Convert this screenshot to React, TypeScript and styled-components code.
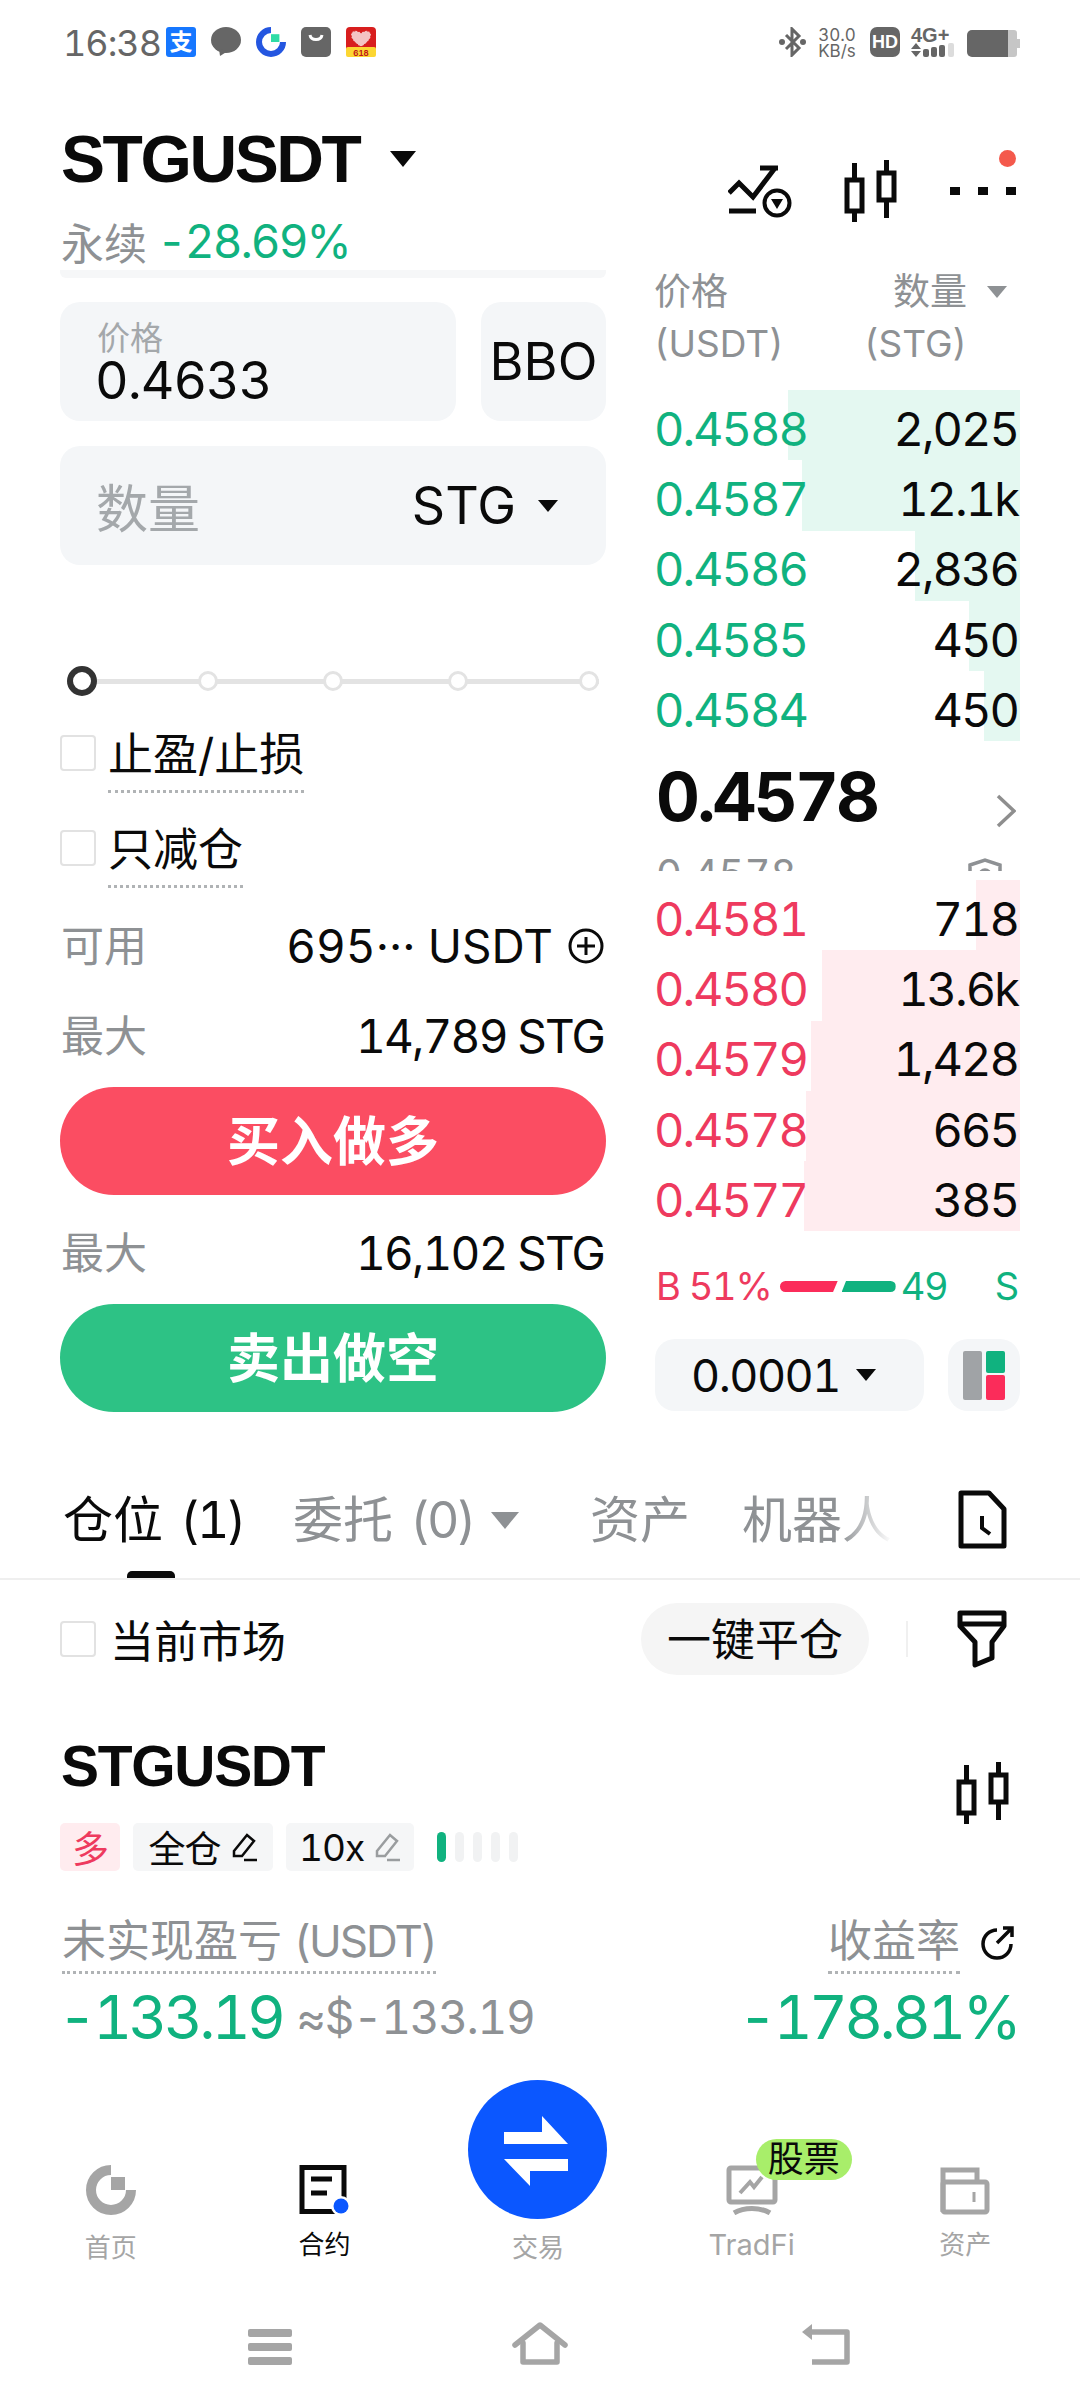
import React from "react";
import styled, { createGlobalStyle } from "styled-components";

const GlobalStyle = createGlobalStyle`
  html, body {
    margin: 0;
    padding: 0;
    background: #ffffff;
  }
  * {
    box-sizing: border-box;
  }
`;

const SANS = `Inter, "Noto Sans CJK SC", sans-serif`;
const GREEN = "#10b27f";
const RED = "#ee3a5e";
const GRAY = "#8e9194";
const LIGHT = "#f4f6f8";

const Page = styled.div`
  width: 1080px;
  height: 2408px;
  overflow: hidden;
  background: #ffffff;
  font-family: ${SANS};
  font-variant-numeric: tabular-nums;
  color: #0a0a0a;
  display: flex;
  flex-direction: column;
`;

/* status bar */
const StatusBar = styled.div`
  height: 84px;
  padding: 27px 60px 0 63px;
  display: flex;
  justify-content: space-between;
  align-items: flex-start;
`;

const StatusGroup = styled.div`
  display: flex;
  align-items: flex-start;
  gap: 15px;
`;

const Clock = styled.span`
  font-size: 36px;
  line-height: 32px;
  letter-spacing: -1px;
  color: #666666;
  width: 88px;
  white-space: nowrap;
`;

const AlipayTile = styled.span`
  width: 30px;
  height: 30px;
  border-radius: 3px;
  background: #1677ff;
  color: #ffffff;
  font-size: 23px;
  line-height: 30px;
  text-align: center;
  font-weight: 700;
`;

const Speed = styled.span`
  width: 40px;
  font-size: 17px;
  line-height: 16px;
  color: #666666;
  text-align: center;
  margin: 0 -2px 0 -4px;
`;

const HdBadge = styled.span`
  width: 30px;
  height: 30px;
  border-radius: 7px;
  background: #666666;
  color: #ffffff;
  font-family: "Liberation Sans", sans-serif;
  font-size: 18px;
  font-weight: 700;
  line-height: 30px;
  text-align: center;
`;

const NetworkBox = styled.div`
  width: 45px;
  margin: 0 -4px;
  display: flex;
  flex-direction: column;
  color: #666666;
`;

const NetworkLabel = styled.span`
  font-family: "Liberation Sans", sans-serif;
  font-size: 20px;
  font-weight: 700;
  line-height: 16px;
`;

/* market header */
const MarketHeader = styled.div`
  height: 180px;
  padding: 43px 64px 0 61px;
  display: flex;
  justify-content: space-between;
`;

const TitleRow = styled.div`
  display: flex;
  align-items: center;
  gap: 30px;
  height: 64px;
`;

const MarketTitle = styled.span`
  font-family: "Liberation Sans", sans-serif;
  font-weight: 700;
  font-size: 66px;
  line-height: 66px;
  letter-spacing: -2.4px;
`;

const SubRow = styled.div`
  margin-top: 26px;
  display: flex;
  gap: 10px;
  align-items: center;
  height: 47px;
  font-size: 43px;
  color: ${GRAY};
`;

const Change = styled.span`
  color: ${GREEN};
  font-size: 46px;
  letter-spacing: -2px;
`;

const Caret = styled.span<{ $size: number; $color?: string }>`
  display: inline-block;
  width: 0;
  height: 0;
  border-left: ${(p) => p.$size}px solid transparent;
  border-right: ${(p) => p.$size}px solid transparent;
  border-top: ${(p) => Math.round(p.$size * 1.2)}px solid ${(p) => p.$color ?? "#0a0a0a"};
`;

const ActionIcons = styled.div`
  margin-top: 23px;
  display: flex;
  align-items: flex-start;
  position: relative;
`;

const TrendSlot = styled.div`
  margin: 15px 52px 0 0;
`;

const CandleSlot = styled.div`
  margin-top: 10px;
`;

const MoreDots = styled.div`
  margin: 37px 0 0 50px;
  width: 66px;
  display: flex;
  justify-content: space-between;
`;

const MoreDot = styled.span`
  width: 10px;
  height: 8px;
  background: #0a0a0a;
`;

const RedDot = styled.span`
  position: absolute;
  right: 0;
  top: 0;
  width: 17px;
  height: 17px;
  border-radius: 50%;
  background: #f4594c;
`;

/* trade panel */
const TradePanel = styled.div`
  height: 1148px;
  padding: 0 60px;
  display: grid;
  grid-template-columns: 546px 364px;
  column-gap: 50px;
`;

const FormColumn = styled.div`
  display: flex;
  flex-direction: column;
`;

const ScrollEdge = styled.div`
  height: 8px;
  margin-top: 6px;
  border-radius: 0 0 6px 6px;
  background: #f6f7f8;
`;

const FieldRow = styled.div`
  margin-top: 24px;
  display: flex;
  gap: 25px;
`;

const Field = styled.div`
  height: 119px;
  flex: 1;
  background: ${LIGHT};
  border-radius: 20px;
`;

const PriceField = styled(Field)`
  padding: 16px 35px;
  display: flex;
  flex-direction: column;
`;

const FieldHint = styled.span`
  font-size: 33px;
  line-height: 40px;
  color: #a4a8ab;
  margin-left: 2px;
`;

const FieldValue = styled.span`
  font-size: 52px;
  line-height: 46px;
  letter-spacing: -1px;
`;

const BboButton = styled(Field)`
  flex: 0 0 125px;
  font-size: 52px;
  line-height: 119px;
  text-align: center;
`;

const QuantityField = styled(Field)`
  flex: none;
  margin-top: 25px;
  padding: 0 48px 0 36px;
  display: flex;
  align-items: center;
  gap: 22px;
`;

const QuantityHint = styled.span`
  font-size: 52px;
  color: #a4a8ab;
  flex: 1;
`;

const QuantityUnit = styled.span`
  font-size: 52px;
`;

const Slider = styled.div`
  margin: 101px 7px 0 7px;
  height: 30px;
  display: flex;
  align-items: center;
  background: linear-gradient(#e3e3e3, #e3e3e3) center / 100% 5px no-repeat;
`;

const SliderThumb = styled.span`
  width: 30px;
  height: 30px;
  border-radius: 50%;
  border: 6px solid #333333;
  background: #ffffff;
`;

const SliderStop = styled.span<{ $gap: number }>`
  width: 20px;
  height: 20px;
  margin-left: ${(p) => p.$gap}px;
  border-radius: 50%;
  border: 3px solid #e3e3e3;
  background: #ffffff;
`;

const CheckRow = styled.div<{ $top: number }>`
  margin-top: ${(p) => p.$top}px;
  display: flex;
  align-items: flex-start;
  gap: 12px;
`;

const CheckBox = styled.span`
  flex: none;
  width: 36px;
  height: 36px;
  margin-top: 10px;
  border: 2px solid #e2e2e2;
  border-radius: 4px;
`;

const FilterBox = styled(CheckBox)`
  margin-top: 0;
`;

const DottedLabel = styled.span<{ $size?: number; $line?: number; $color?: string }>`
  font-size: ${(p) => p.$size ?? 45}px;
  line-height: ${(p) => p.$line ?? 60}px;
  color: ${(p) => p.$color ?? "#0a0a0a"};
  padding-bottom: 5px;
  border-bottom: 3px dotted #b0b3b5;
  white-space: nowrap;
`;

const UnitText = styled.span`
  letter-spacing: -2px;
`;

const InfoRow = styled.div<{ $top: number }>`
  margin-top: ${(p) => p.$top}px;
  height: 60px;
  display: flex;
  justify-content: space-between;
  align-items: center;
`;

const InfoLabel = styled.span`
  font-size: 43px;
  color: ${GRAY};
  margin: 0 0 6px 1px;
`;

const InfoValue = styled.span`
  font-size: 46px;
  letter-spacing: -1.8px;
  margin-right: 2px;
  display: flex;
  align-items: center;
  gap: 15px;
`;

const AvailableValue = styled(InfoValue)`
  letter-spacing: 0;
`;

const TradeButton = styled.div<{ $bg: string }>`
  margin-top: 21px;
  height: 108px;
  border-radius: 54px;
  background: ${(p) => p.$bg};
  color: #ffffff;
  font-size: 53px;
  font-weight: 700;
  line-height: 111px;
  text-align: center;
`;

/* order book */
const BookColumn = styled.div`
  display: flex;
  flex-direction: column;
`;

const BookHeader = styled.div`
  margin-top: 2px;
  height: 124px;
  display: flex;
  justify-content: space-between;
  color: ${GRAY};
  font-size: 37px;
  line-height: 52px;
`;

const HeadCol = styled.div`
  display: flex;
  flex-direction: column;
  margin-left: -2px;
`;

const AmountHead = styled(HeadCol)`
  width: 156px;
  padding-right: 13px;
`;

const AmountTitle = styled.span`
  display: flex;
  align-items: center;
  justify-content: flex-end;
  gap: 20px;
`;

const BookRow = styled.div<{ $depth: number; $tint: string }>`
  height: 70.3px;
  padding: 6px 2px 0 0;
  display: flex;
  justify-content: space-between;
  align-items: center;
  font-size: 47px;
  letter-spacing: -2px;
  background: linear-gradient(
    to left,
    ${(p) => p.$tint} ${(p) => p.$depth}px,
    transparent ${(p) => p.$depth}px
  );
`;

const BookPrice = styled.span<{ $color: string }>`
  color: ${(p) => p.$color};
  margin-left: -2px;
`;

const MidSection = styled.div`
  height: 138.5px;
  overflow: hidden;
  display: flex;
  flex-direction: column;
`;

const MidTop = styled.div`
  height: 109px;
  padding: 0 4px 0 0;
  display: flex;
  justify-content: space-between;
  align-items: center;
`;

const MidPrice = styled.span`
  font-size: 68px;
  font-weight: 700;
  letter-spacing: -2.8px;
`;

const ChevronSlot = styled.span`
  margin-top: 30px;
  display: flex;
`;

const MarkRow = styled.div`
  height: 21px;
  overflow: hidden;
  display: flex;
  justify-content: space-between;
  padding-right: 18px;
  font-size: 40px;
  line-height: 48px;
  color: ${GRAY};
`;

const ShieldSlot = styled.span`
  margin-top: 4px;
`;

const RatioRow = styled.div`
  margin-top: 32px;
  height: 46px;
  display: flex;
  align-items: center;
  padding-right: 2px;
  font-size: 38px;
  letter-spacing: -1.2px;
`;

const RatioText = styled.span<{ $color: string }>`
  color: ${(p) => p.$color};
`;

const RatioBuy = styled.span`
  width: 58px;
  height: 11px;
  margin-left: 8px;
  background: #fb2c5a;
  border-radius: 6px 0 0 6px;
  clip-path: polygon(0 0, 100% 0, 92% 100%, 0 100%);
`;

const RatioSell = styled.span`
  width: 54px;
  height: 11px;
  margin: 0 5px 0 4px;
  background: ${GREEN};
  border-radius: 0 6px 6px 0;
  clip-path: polygon(8% 0, 100% 0, 100% 100%, 0 100%);
`;

const RatioEnd = styled.span`
  margin-left: auto;
  color: ${GREEN};
`;

const BookTools = styled.div`
  margin-top: 30px;
  display: flex;
  justify-content: space-between;
  margin-left: -1px;
`;

const StepPicker = styled.div`
  width: 269px;
  height: 72px;
  border-radius: 20px;
  background: ${LIGHT};
  padding-left: 36px;
  display: flex;
  align-items: center;
  gap: 16px;
  font-size: 45px;
  letter-spacing: -1.5px;
`;

const LayoutButton = styled.div`
  width: 72px;
  height: 72px;
  border-radius: 20px;
  background: ${LIGHT};
  display: flex;
  align-items: center;
  justify-content: center;
`;

/* positions tabs */
const TabBar = styled.div`
  height: 168px;
  padding: 73px 0 0 63px;
  border-bottom: 2px solid #efefef;
  display: flex;
  align-items: flex-start;
`;

const Tab = styled.div<{ $active?: boolean; $width: number }>`
  position: relative;
  width: ${(p) => p.$width}px;
  height: 93px;
  display: flex;
  align-items: flex-start;
  gap: 17px;
  font-size: 50px;
  line-height: 70px;
  white-space: nowrap;
  color: ${(p) => (p.$active ? "#0a0a0a" : GRAY)};
`;

const TabCount = styled.span`
  letter-spacing: -2.5px;
`;

const TabIndicator = styled.span`
  position: absolute;
  left: 64px;
  bottom: 0;
  width: 48px;
  height: 7px;
  border-radius: 5px 5px 0 0;
  background: #0a0a0a;
`;

const TabCaretWrap = styled.span`
  display: flex;
  margin-top: 27px;
`;

const FadedTab = styled.span`
  -webkit-mask-image: linear-gradient(to right, #000 65%, transparent 100%);
  mask-image: linear-gradient(to right, #000 65%, transparent 100%);
`;

const TabEndIcon = styled.div`
  margin: 5px 0 0 63px;
`;

const FilterRow = styled.div`
  margin-top: 23px;
  height: 72px;
  padding: 0 73px 0 60px;
  display: flex;
  align-items: center;
`;

const FilterLabel = styled.span`
  font-size: 44px;
  margin-left: 14px;
  flex: 1;
`;

const ClosePill = styled.span`
  width: 228px;
  height: 72px;
  border-radius: 36px;
  background: #f5f5f5;
  font-size: 44px;
  line-height: 74px;
  text-align: center;
`;

const FilterDivider = styled.span`
  width: 2px;
  height: 36px;
  margin: 0 49px 0 37px;
  background: #f0f0f0;
`;

/* open position */
const PositionCard = styled.div`
  margin-top: 61px;
  padding: 0 62px 0 60px;
`;

const PositionHead = styled.div`
  height: 60px;
  display: flex;
  justify-content: space-between;
  align-items: flex-start;
`;

const PositionTitle = styled.span`
  margin-left: 1px;
  font-family: "Liberation Sans", sans-serif;
  font-weight: 700;
  font-size: 57px;
  line-height: 60px;
  letter-spacing: -1.3px;
`;

const PositionChart = styled.div`
  margin: 26px 6px 0 0;
  height: 0;
`;

const TagRow = styled.div`
  margin-top: 27px;
  display: flex;
  align-items: center;
  gap: 13px;
`;

const Tag = styled.span<{ $long?: boolean; $width: number }>`
  width: ${(p) => p.$width}px;
  height: 48px;
  border-radius: 5px;
  background: ${(p) => (p.$long ? "#ffecef" : "#f5f6f7")};
  color: ${(p) => (p.$long ? RED : "#0a0a0a")};
  font-size: 37px;
  letter-spacing: -1px;
  display: flex;
  align-items: center;
  justify-content: center;
  gap: 9px;
`;

const LeverageTicks = styled.div`
  margin-left: 10px;
  display: flex;
  gap: 9px;
`;

const Tick = styled.span<{ $on?: boolean }>`
  width: 9px;
  height: 30px;
  border-radius: 5px;
  background: ${(p) => (p.$on ? GREEN : "#f1f2f3")};
`;

const LabelRow = styled.div`
  margin: 45px 0 0 2px;
  display: flex;
  justify-content: space-between;
  align-items: flex-start;
`;

const YieldLabel = styled.div`
  display: flex;
  align-items: flex-start;
  gap: 20px;
  margin-right: 3px;
`;

const RefreshWrap = styled.span`
  margin-top: 9px;
  height: 35px;
`;

const ValueRow = styled.div`
  margin: 8px 0 0 -2px;
  height: 70px;
  display: flex;
  align-items: center;
`;

const PnlValue = styled.span`
  font-size: 60px;
  color: ${GREEN};
  letter-spacing: -3.6px;
`;

const PnlFiat = styled.span`
  margin-left: 14px;
  font-size: 46px;
  letter-spacing: -1.4px;
  color: ${GRAY};
  flex: 1;
`;

/* bottom navigation */
const BottomNav = styled.div`
  margin-top: 28px;
  height: 192px;
  padding: 0 8px 0 4px;
  display: grid;
  grid-template-columns: repeat(5, 1fr);
`;

const NavItem = styled.div`
  position: relative;
  display: flex;
  flex-direction: column;
  align-items: center;
  justify-content: flex-end;
  padding-bottom: 12px;
`;

const NavLabel = styled.span<{ $active?: boolean; $lift?: number; $size?: number }>`
  margin-top: ${(p) => 18 - (p.$lift ?? 0)}px;
  margin-bottom: ${(p) => p.$lift ?? 0}px;
  font-size: ${(p) => p.$size ?? 26}px;
  line-height: 30px;
  color: ${(p) => (p.$active ? "#0a0a0a" : "#a5a5a5")};
`;

const TradeCircle = styled.div`
  width: 139px;
  height: 139px;
  border-radius: 50%;
  background: #0b57ff;
  margin-bottom: -4px;
`;

const StockBadge = styled.span`
  position: absolute;
  left: 111px;
  top: 59px;
  width: 96px;
  height: 41px;
  border-radius: 21px;
  background: #a8ee6a;
  font-size: 36px;
  line-height: 40px;
  text-align: center;
`;

/* system navigation */
const SystemNav = styled.div`
  padding-top: 50px;
  display: flex;
  align-items: flex-end;
`;

const SystemKey = styled.span<{ $left: number }>`
  margin-left: ${(p) => p.$left}px;
  display: flex;
`;

/* icons */
const CandleIcon = () => (
  <svg width="56" height="62" viewBox="0 0 56 62" fill="none" stroke="#0a0a0a" strokeWidth="5">
    <rect x="3" y="20" width="15" height="31" />
    <path d="M10.500 3V20M10.500 51V62" />
    <rect x="35" y="13" width="15" height="27" />
    <path d="M42.500 0V13M42.500 40V58" />
  </svg>
);

const GapRing = ({ size, ring, square }: { size: number; ring: string; square: string }) => (
  <svg width={size} height={size} viewBox="0 0 50 50" fill="none">
    <path d="M25 5A20 20 0 1 0 45 25" stroke={ring} strokeWidth="10" />
    <rect x="25" y="12" width="14" height="13" fill={square} />
  </svg>
);

const PencilIcon = ({ color }: { color: string }) => (
  <svg width="28" height="30" viewBox="0 0 28 30" fill="none" stroke={color} strokeWidth="2.500">
    <path d="M4 19L17 3L24 9L12 24H4Z" />
    <path d="M14 28H27" />
  </svg>
);

const BluetoothIcon = () => (
  <svg width="27" height="30" viewBox="0 0 27 30" fill="none">
    <path d="M7 8L20 21L13 28V2L20 9L7 22" stroke="#666666" strokeWidth="3" />
    <circle cx="3" cy="15" r="3" fill="#666666" />
    <circle cx="24" cy="15" r="3" fill="#666666" />
  </svg>
);

const SignalIcon = () => (
  <svg width="45" height="14" viewBox="0 0 45 14">
    <path d="M0 6L5 0L10 6ZM0 8H10L5 14Z" fill="#666666" />
    <rect x="12" y="6" width="6" height="8" rx="2" fill="#666666" />
    <rect x="20" y="4" width="6" height="10" rx="2" fill="#666666" />
    <rect x="28" y="2" width="6" height="12" rx="2" fill="#666666" />
    <rect x="37" y="0" width="6" height="14" rx="2" fill="#dcdcdc" />
  </svg>
);

const BatteryIcon = () => (
  <svg width="53" height="27" viewBox="0 0 53 27">
    <path d="M41 0H47A3 3 0 0 1 50 3V9H53V18H50V24A3 3 0 0 1 47 27H41Z" fill="#c6c6c6" />
    <path d="M5 0H41V27H5A5 5 0 0 1 0 22V5A5 5 0 0 1 5 0Z" fill="#666666" />
  </svg>
);

const BatterySlot = styled.span`
  margin-top: 3px;
  display: flex;
`;

const ClipboardTile = () => (
  <svg width="30" height="30" viewBox="0 0 30 30">
    <rect width="30" height="30" rx="5" fill="#666666" />
    <path d="M9 8C10 14 20 14 21 8" fill="none" stroke="#ffffff" strokeWidth="3" />
  </svg>
);

const MallTile = () => (
  <svg width="30" height="30" viewBox="0 0 30 30">
    <rect width="30" height="24" rx="4" fill="#d81e1e" />
    <path
      d="M15 20C9 16 5 12 5 8C5 4 10 2 15 6C20 2 25 4 25 8C25 12 21 16 15 20Z"
      fill="#f4c4c4"
      stroke="#d81e1e"
      strokeWidth="1"
      strokeDasharray="2 1.500"
    />
    <rect y="20" width="30" height="10" rx="2" fill="#fcd632" />
    <text x="15" y="28.500" textAnchor="middle" fontSize="8" fontWeight="700" fill="#c01818">618</text>
  </svg>
);

const ChatTile = () => (
  <svg width="30" height="30" viewBox="0 0 30 30">
    <ellipse cx="15" cy="13" rx="15" ry="13" fill="#666666" />
    <path d="M8 22L9 29L17 24Z" fill="#666666" />
  </svg>
);

const SwitchArrows = () => (
  <svg width="139" height="139" viewBox="0 0 139 139" fill="#ffffff">
    <path d="M36 52H74V36L100 64H36Z" />
    <path d="M100 79V91H62V106L36 79Z" />
  </svg>
);

const asks = [
  { price: "0.4588", amount: "2,025", depth: 232 },
  { price: "0.4587", amount: "12.1k", depth: 218 },
  { price: "0.4586", amount: "2,836", depth: 105 },
  { price: "0.4585", amount: "450", depth: 51 },
  { price: "0.4584", amount: "450", depth: 36 },
];

const bids = [
  { price: "0.4581", amount: "718", depth: 44 },
  { price: "0.4580", amount: "13.6k", depth: 198 },
  { price: "0.4579", amount: "1,428", depth: 209 },
  { price: "0.4578", amount: "665", depth: 214 },
  { price: "0.4577", amount: "385", depth: 216 },
];

const sliderStops = [
  { percent: 25, gap: 101 },
  { percent: 50, gap: 105 },
  { percent: 75, gap: 105 },
  { percent: 100, gap: 111 },
];

export default function App() {
  return (
    <Page>
      <GlobalStyle />

      <StatusBar>
        <StatusGroup>
          <Clock>16:38</Clock>
          <AlipayTile>支</AlipayTile>
          <ChatTile />
          <GapRing size={30} ring="#2456e0" square="#2fdca6" />
          <ClipboardTile />
          <MallTile />
        </StatusGroup>
        <StatusGroup>
          <BluetoothIcon />
          <Speed>
            30.0
            <br />
            KB/s
          </Speed>
          <HdBadge>HD</HdBadge>
          <NetworkBox>
            <NetworkLabel>4G+</NetworkLabel>
            <SignalIcon />
          </NetworkBox>
          <BatterySlot>
            <BatteryIcon />
          </BatterySlot>
        </StatusGroup>
      </StatusBar>

      <MarketHeader>
        <div>
          <TitleRow>
            <MarketTitle>STGUSDT</MarketTitle>
            <Caret $size={13} />
          </TitleRow>
          <SubRow>
            <span>永续</span>
            <Change>-28.69%</Change>
          </SubRow>
        </div>
        <ActionIcons>
          <TrendSlot>
            <svg width="64" height="54" viewBox="0 0 64 54" fill="none" stroke="#0a0a0a">
              <path d="M1 28L11 18L25 32L47 3" strokeWidth="5" />
              <path d="M32 3H50" strokeWidth="5" />
              <path d="M1 46H28" strokeWidth="5" />
              <circle cx="49" cy="38" r="12.500" strokeWidth="4" />
              <path d="M43 34H55L49 44Z" fill="#0a0a0a" stroke="none" />
            </svg>
          </TrendSlot>
          <CandleSlot>
            <CandleIcon />
          </CandleSlot>
          <MoreDots>
            <MoreDot />
            <MoreDot />
            <MoreDot />
          </MoreDots>
          <RedDot />
        </ActionIcons>
      </MarketHeader>

      <TradePanel>
        <FormColumn>
          <ScrollEdge />
          <FieldRow>
            <PriceField>
              <FieldHint>价格</FieldHint>
              <FieldValue>0.4633</FieldValue>
            </PriceField>
            <BboButton>BBO</BboButton>
          </FieldRow>
          <QuantityField>
            <QuantityHint>数量</QuantityHint>
            <QuantityUnit>STG</QuantityUnit>
            <Caret $size={10} />
          </QuantityField>

          <Slider>
            <SliderThumb />
            {sliderStops.map((stop) => (
              <SliderStop key={stop.percent} $gap={stop.gap} />
            ))}
          </Slider>

          <CheckRow $top={29}>
            <CheckBox />
            <DottedLabel>止盈/止损</DottedLabel>
          </CheckRow>
          <CheckRow $top={27}>
            <CheckBox />
            <DottedLabel>只减仓</DottedLabel>
          </CheckRow>

          <InfoRow $top={28}>
            <InfoLabel>可用</InfoLabel>
            <AvailableValue>
              695··· USDT
              <svg width="36" height="36" viewBox="0 0 36 36" fill="none" stroke="#0a0a0a" strokeWidth="3">
                <circle cx="18" cy="18" r="16" />
                <path d="M18 9V27M9 18H27" />
              </svg>
            </AvailableValue>
          </InfoRow>
          <InfoRow $top={30}>
            <InfoLabel>最大</InfoLabel>
            <InfoValue>14,789 STG</InfoValue>
          </InfoRow>
          <TradeButton $bg="#fb4d62">买入做多</TradeButton>
          <InfoRow $top={28}>
            <InfoLabel>最大</InfoLabel>
            <InfoValue>16,102 STG</InfoValue>
          </InfoRow>
          <TradeButton $bg="#2dc285">卖出做空</TradeButton>
        </FormColumn>

        <BookColumn>
          <BookHeader>
            <HeadCol>
              <span>价格</span>
              <span>(USDT)</span>
            </HeadCol>
            <AmountHead>
              <AmountTitle>
                数量
                <Caret $size={10} $color={GRAY} />
              </AmountTitle>
              <span>(STG)</span>
            </AmountHead>
          </BookHeader>

          {asks.map((row) => (
            <BookRow key={row.price} $depth={row.depth} $tint="#e4f8f1">
              <BookPrice $color={GREEN}>{row.price}</BookPrice>
              <span>{row.amount}</span>
            </BookRow>
          ))}

          <MidSection>
            <MidTop>
              <MidPrice>0.4578</MidPrice>
              <ChevronSlot>
                <svg width="20" height="34" viewBox="0 0 20 34" fill="none" stroke="#8e8e8e" strokeWidth="3.500">
                  <path d="M2 2L18 17L2 32" />
                </svg>
              </ChevronSlot>
            </MidTop>
            <MarkRow>
              <span>0.4578</span>
              <ShieldSlot>
                <svg width="34" height="34" viewBox="0 0 34 34" fill="none" stroke={GRAY} strokeWidth="3.500">
                  <path d="M2 7L17 2L32 7V20C32 26 24 31 17 33C10 31 2 26 2 20Z" />
                  <circle cx="17" cy="17" r="5" />
                </svg>
              </ShieldSlot>
            </MarkRow>
          </MidSection>

          {bids.map((row) => (
            <BookRow key={row.price} $depth={row.depth} $tint="#ffecef">
              <BookPrice $color={RED}>{row.price}</BookPrice>
              <span>{row.amount}</span>
            </BookRow>
          ))}

          <RatioRow>
            <RatioText $color={RED}>B 51%</RatioText>
            <RatioBuy />
            <RatioSell />
            <RatioText $color={GREEN}>49</RatioText>
            <RatioEnd>S</RatioEnd>
          </RatioRow>

          <BookTools>
            <StepPicker>
              0.0001
              <Caret $size={10} />
            </StepPicker>
            <LayoutButton>
              <svg width="42" height="49" viewBox="0 0 42 49">
                <rect width="19" height="49" rx="2" fill="#a0a3a6" />
                <rect x="23" width="19" height="22" rx="2" fill={GREEN} />
                <rect x="23" y="24" width="19" height="25" rx="2" fill="#fb2c5a" />
              </svg>
            </LayoutButton>
          </BookTools>
        </BookColumn>
      </TradePanel>

      <TabBar>
        <Tab $active $width={230}>
          <span>仓位</span>
          <TabCount>(1)</TabCount>
          <TabIndicator />
        </Tab>
        <Tab $width={297}>
          <span>委托</span>
          <TabCount>(0)</TabCount>
          <TabCaretWrap>
            <Caret $size={14} $color={GRAY} />
          </TabCaretWrap>
        </Tab>
        <Tab $width={152}>
          <span>资产</span>
        </Tab>
        <Tab $width={153}>
          <FadedTab>机器人</FadedTab>
        </Tab>
        <TabEndIcon>
          <svg width="49" height="59" viewBox="0 0 49 59" fill="none" stroke="#0a0a0a" strokeWidth="5">
            <path d="M3 3H31L46 19V56H3Z" strokeLinejoin="round" />
            <path d="M24 26V38L32 44" strokeWidth="4" />
          </svg>
        </TabEndIcon>
      </TabBar>

      <FilterRow>
        <FilterBox />
        <FilterLabel>当前市场</FilterLabel>
        <ClosePill>一键平仓</ClosePill>
        <FilterDivider />
        <svg width="50" height="58" viewBox="0 0 50 58" fill="none" stroke="#0a0a0a" strokeWidth="5">
          <path d="M3 3H47V16L35 32V48L18 55V32L3 16Z" strokeLinejoin="round" />
          <path d="M3 14H47" />
        </svg>
      </FilterRow>

      <PositionCard>
        <PositionHead>
          <PositionTitle>STGUSDT</PositionTitle>
          <PositionChart>
            <CandleIcon />
          </PositionChart>
        </PositionHead>
        <TagRow>
          <Tag $long $width={60}>多</Tag>
          <Tag $width={140}>
            全仓
            <PencilIcon color="#0a0a0a" />
          </Tag>
          <Tag $width={128}>
            10x
            <PencilIcon color="#9a9d9f" />
          </Tag>
          <LeverageTicks>
            <Tick $on />
            <Tick />
            <Tick />
            <Tick />
            <Tick />
          </LeverageTicks>
        </TagRow>
        <LabelRow>
          <DottedLabel $size={44} $line={50} $color={GRAY}>
            未实现盈亏 <UnitText>(USDT)</UnitText>
          </DottedLabel>
          <YieldLabel>
            <DottedLabel $size={44} $line={50} $color={GRAY}>收益率</DottedLabel>
            <RefreshWrap>
              <svg width="35" height="35" viewBox="0 0 35 35" fill="none" stroke="#0a0a0a" strokeWidth="3.500">
                <path d="M17 5A14 14 0 1 0 31 19" />
                <path d="M17 18L31 4M23 3H32V12" />
              </svg>
            </RefreshWrap>
          </YieldLabel>
        </LabelRow>
        <ValueRow>
          <PnlValue>-133.19</PnlValue>
          <PnlFiat>≈$-133.19</PnlFiat>
          <PnlValue>-178.81%</PnlValue>
        </ValueRow>
      </PositionCard>

      <BottomNav>
        <NavItem>
          <GapRing size={50} ring="#a5a5a5" square="#a5a5a5" />
          <NavLabel>首页</NavLabel>
        </NavItem>
        <NavItem>
          <svg width="50" height="50" viewBox="0 0 50 50" fill="none">
            <rect x="3" y="2.500" width="42" height="44" stroke="#0a0a0a" strokeWidth="5" />
            <path d="M12 14H33M12 28H28" stroke="#0a0a0a" strokeWidth="5" />
            <circle cx="42" cy="41" r="10" fill="#ffffff" />
            <circle cx="42" cy="41" r="7.500" fill="#0b57ff" />
          </svg>
          <NavLabel $active $lift={3}>合约</NavLabel>
        </NavItem>
        <NavItem>
          <TradeCircle>
            <SwitchArrows />
          </TradeCircle>
          <NavLabel>交易</NavLabel>
        </NavItem>
        <NavItem>
          <svg width="52" height="50" viewBox="0 0 52 50" fill="none" stroke="#a5a5a5" strokeWidth="5">
            <rect x="3" y="3" width="46" height="34" rx="2" />
            <path d="M8 48C18 42 34 42 44 48" />
            <path d="M14 28L24 17L28 22L36 12" strokeWidth="4" />
          </svg>
          <NavLabel $lift={3} $size={29}>TradFi</NavLabel>
          <StockBadge>股票</StockBadge>
        </NavItem>
        <NavItem>
          <svg width="50" height="48" viewBox="0 0 50 48" fill="none" stroke="#a5a5a5" strokeWidth="5">
            <path d="M3 45V3H37V15" />
            <rect x="3" y="15" width="44" height="30" rx="2" />
            <path d="M34 25V35" strokeWidth="3" />
          </svg>
          <NavLabel $lift={3}>资产</NavLabel>
        </NavItem>
      </BottomNav>

      <SystemNav>
        <SystemKey $left={248}>
          <svg width="44" height="36" viewBox="0 0 44 36" fill="#a5a5a5">
            <rect width="44" height="8" rx="2" />
            <rect y="14" width="44" height="8" rx="2" />
            <rect y="28" width="44" height="8" rx="2" />
          </svg>
        </SystemKey>
        <SystemKey $left={220}>
          <svg width="56" height="43" viewBox="0 0 56 43" fill="none" stroke="#a5a5a5" strokeWidth="5.500" strokeLinecap="round" strokeLinejoin="round">
            <path d="M3 23L28 3L53 23" />
            <path d="M11 21V40H45V21" />
          </svg>
        </SystemKey>
        <SystemKey $left={234}>
          <svg width="48" height="41" viewBox="0 0 48 41" fill="none" stroke="#a5a5a5" strokeWidth="5.500" strokeLinejoin="round">
            <path d="M6 8H45V38H10" />
            <path d="M0 8L10 0V16Z" fill="#a5a5a5" stroke="none" />
          </svg>
        </SystemKey>
      </SystemNav>
    </Page>
  );
}
